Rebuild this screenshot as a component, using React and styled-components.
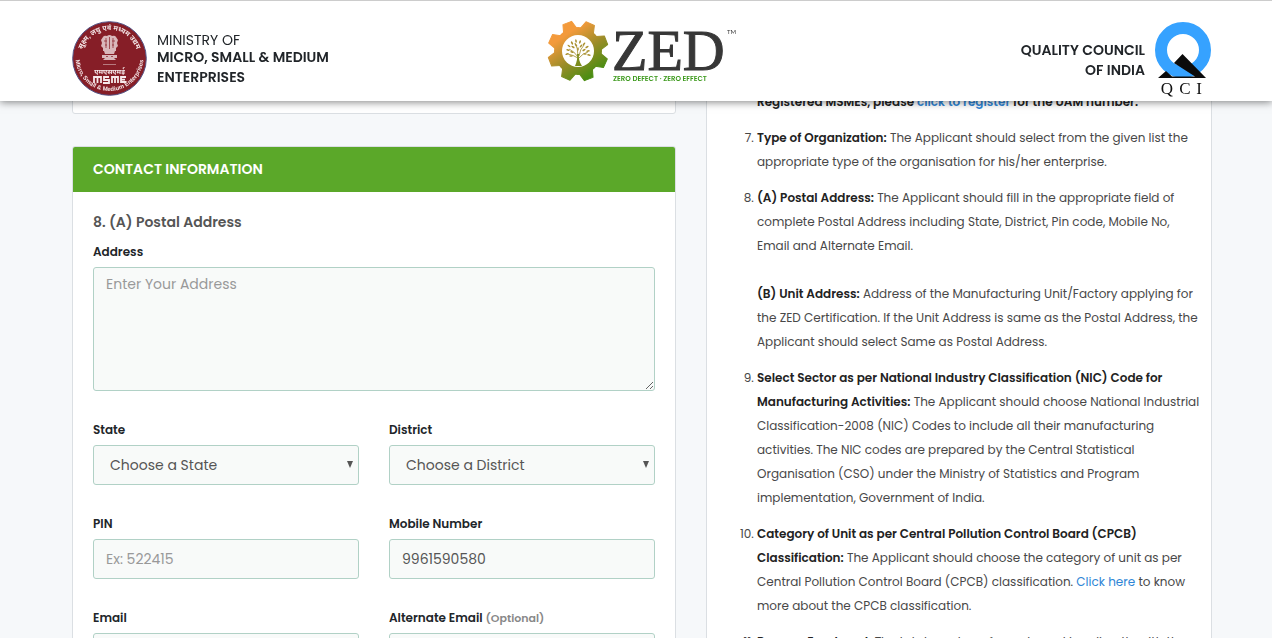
import styled, { createGlobalStyle } from "styled-components";
import { useState } from "react";

const GlobalStyle = createGlobalStyle`
  * {
    box-sizing: border-box;
  }
  body {
    margin: 0;
    background: #f6f8fa;
    font-family: Poppins, Inter, "Open Sans", sans-serif;
    color: #212529;
  }
`;

const Page = styled.div`
  height: 100vh;
  overflow: hidden;
`;

const Header = styled.header`
  position: fixed;
  top: 0;
  left: 0;
  right: 0;
  z-index: 10;
  display: grid;
  grid-template-columns: 1fr auto 1fr;
  align-items: start;
  height: 101px;
  padding: 20px 60px 0 72px;
  background: white;
  border-top: 1px solid #ccc;
  box-shadow: 0 1px 8px rgba(0, 0, 0, 0.5);
`;

const Brand = styled.div`
  display: flex;
  gap: 10px;
  justify-content: ${(props) => (props.$end ? "flex-end" : "flex-start")};
  text-align: ${(props) => (props.$end ? "right" : "left")};
`;

const BrandText = styled.div`
  padding-top: ${(props) => (props.$end ? "19px" : "12px")};
  font-size: 14px;
  line-height: 20px;
  font-weight: 600;
`;

const BrandSmall = styled.div`
  line-height: 14px;
  font-weight: 400;
`;

const Main = styled.main`
  display: grid;
  grid-template-columns: 604fr 506fr;
  gap: 30px;
  padding: 0 60px 0 72px;
`;

const Card = styled.section`
  background: white;
  border: 1px solid #dbdfe3;
  border-radius: 3px;
`;

const PreviousCard = styled(Card)`
  height: 114px;
  margin-bottom: 32px;
`;

const CardTitle = styled.h2`
  margin: 0;
  padding: 0 20px;
  background: #5ba829;
  border-radius: 2px 2px 0 0;
  color: white;
  font-size: 14px;
  line-height: 45px;
  font-weight: 600;
`;

const Form = styled.form`
  display: grid;
  grid-template-columns: 1fr 1fr;
  column-gap: 30px;
  padding: 20px;
`;

const SubTitle = styled.h3`
  grid-column: 1 / -1;
  margin: 0 0 10px;
  color: #555;
  font-size: 14px;
  line-height: 20px;
  font-weight: 600;
`;

const Field = styled.div`
  grid-column: ${(props) => (props.$wide ? "1 / -1" : "auto")};
  margin-bottom: 29px;
`;

const Label = styled.label`
  display: block;
  margin-bottom: 5px;
  font-size: 12px;
  line-height: 20px;
  font-weight: 600;
`;

const Optional = styled.span`
  color: #888;
  font-size: 11px;
  font-weight: 600;
`;

const Input = styled.input`
  display: block;
  width: 100%;
  height: 40px;
  padding: 0 12px;
  background: #f8faf9;
  border: 1px solid #b1d1c6;
  border-radius: 3px;
  color: #555;
  font: inherit;
  font-size: 14px;
  &::placeholder {
    color: #999;
  }
`;

const TextArea = styled(Input).attrs({ as: "textarea" })`
  height: 124px;
  padding: 6px 12px;
  line-height: 20px;
`;

const SelectBox = styled.div`
  position: relative;
  &::after {
    content: "";
    position: absolute;
    right: 6px;
    top: 16px;
    border: solid transparent;
    border-width: 7px 3px 0;
    border-top-color: #555;
    pointer-events: none;
  }
`;

const Select = styled(Input).attrs({ as: "select" })`
  padding: 0 16px;
  appearance: none;
`;

const Guide = styled(Card)`
  padding: 89px 8px 0 50px;
`;

const List = styled.ol`
  margin: 0;
  padding: 0;
  color: #484848;
  font-size: 12px;
  line-height: 24px;
`;

const Item = styled.li`
  margin-bottom: 12px;
  list-style: ${(props) => (props.$plain ? "none" : "decimal")};
  b {
    color: #222;
    font-weight: 600;
  }
`;

const SecondPart = styled.div`
  margin-top: 24px;
`;

const Link = styled.a`
  color: #2f86d6;
  text-decoration: none;
`;

const Logo = styled.svg`
  display: block;
  flex: none;
  overflow: visible;
`;

const MsmeLogo = () => (
  <Logo width="75" height="75" viewBox="0 0 75 75" role="img" aria-label="MSME">
    <defs>
      <path id="arcTop" d="M9 37.5a28.500 28.500 0 0 1 57 0" />
      <path id="arcBottom" d="M3.5 36a34 34 0 0 0 68 0" />
    </defs>
    <circle cx="37.5" cy="37.5" r="36.8" fill="#861e27" stroke="#515184" />
    <g fill="#f6e9ea" fontWeight="700" textAnchor="middle">
      <text fontSize="7" fontFamily="Noto Sans, sans-serif">
        <textPath href="#arcTop" startOffset="50%">सूक्ष्म, लघु एवं मध्यम उद्यम</textPath>
      </text>
      <text fontSize="6" fontFamily="Liberation Sans, sans-serif">
        <textPath href="#arcBottom" startOffset="50%">Micro, Small &amp; Medium Enterprises</textPath>
      </text>
      <text x="37.5" y="53" fontSize="7" fontFamily="Noto Sans, sans-serif">एमएसएमई</text>
    </g>
    <g fill="#d9b7ba">
      <path d="M31 16q1-2 4-1 2.500-2 5 0 3-1 4 1l2 3-1 3 1 3-2 2v3h-13v-3l-2-2 1-3-1-3z" />
      <path d="M32 30h11l-1 3h-9zM30 34h15v3h-15zM33 37h9l2 2h-13z" />
      <path d="M31 43h13v1h-13z" opacity=".6" />
    </g>
    <path d="M34 17v10M37.500 16v12M41 17v10M32 20h3M40 20h3M33 24h2M40 24h2M34 35.500h2M39 35.500h2" stroke="#861e27" strokeWidth=".7" fill="none" />
    <path d="M22 62v-6h7v6M25.500 56v6M37 56h-5v3h5v3h-6M40 62v-6h6v6M43 56v6M54 56h-5v5h5M49 58.700h4" stroke="#f6e9ea" strokeWidth="1.800" fill="none" />
  </Logo>
);

const TOOTH = "M-7-22-4.600-30H4.600L7-22z";
const LEAVES = [
  [-10, -1, 20], [-9, -5, 40], [-11, 3, -20], [-6, -8, 60], [-5, -4, 30], [-2, -10, 80],
  [-2, -6, 50], [2, -9, 110], [3, -5, 130], [6, -7, 130], [9, -4, 150], [10, 0, 170],
  [11, 4, 10], [6, -1, 150], [-6, 1, 20], [7, 3, 0], [-7, 5, 0], [0, -2, 90],
];

const ZedLogo = () => (
  <Logo width="190" height="64" viewBox="0 0 190 64" role="img" aria-label="ZED">
    <defs>
      <linearGradient id="gear" gradientUnits="userSpaceOnUse" x1="-16" y1="-20" x2="14" y2="24">
        <stop offset=".1" stopColor="#f39a3b" />
        <stop offset=".55" stopColor="#9a8c28" />
        <stop offset="1" stopColor="#4b8d12" />
      </linearGradient>
      <mask id="gearMask">
        <circle r="24" fill="white" />
        {[24, 69, 114, 159, 204, 249, 294, 339].map((a) => (
          <path key={a} d={TOOTH} fill="white" stroke="white" strokeLinejoin="round" transform={`rotate(${a})`} />
        ))}
        <circle r="16" fill="black" />
      </mask>
    </defs>
    <g transform="translate(31 30)">
      <rect x="-31" y="-31" width="62" height="62" fill="url(#gear)" mask="url(#gearMask)" />
      <path d="M0 6Q-4 0-9-2M0 7Q-5 4-10 3M0 5Q0-3-3-8M1 5Q2-2 6-6M1 7Q5 2 10 1" fill="none" stroke="#a08a28" strokeWidth=".8" />
      <path d="M-3 15Q0 8-1 3h2q-1 6 3 12z" fill="#7b8c1c" />
      {LEAVES.map(([x, y, a]) => (
        <ellipse key={`${x} ${y}`} rx="1.800" ry=".8" fill="#a98f2c" transform={`translate(${x} ${y}) rotate(${a})`} />
      ))}
    </g>
    <text x="65" y="49" fontFamily="Liberation Serif, serif" fontSize="58" fill="#373737" stroke="#373737" strokeWidth="1">ZED</text>
    <text x="180" y="13" fontFamily="Lato, sans-serif" fontSize="6" fill="#373737">TM</text>
    <text x="66" y="60" fontFamily="Poppins, sans-serif" fontWeight="600" fontSize="7" fill="#3e9a1e">ZERO DEFECT · ZERO EFFECT</text>
  </Logo>
);

const QciLogo = () => (
  <Logo width="57" height="76" viewBox="0 0 57 76" role="img" aria-label="QCI">
    <circle cx="28" cy="29" r="22" fill="none" stroke="#36a2ff" strokeWidth="12" />
    <path d="M3 57 11 50 17 55.500H40L19 42 27.500 33 51 57z" fill="#0b0b0b" />
    <g textAnchor="middle" fontFamily="Liberation Serif, serif" fontSize="17" fill="#111">
      <text x="12" y="73">Q</text>
      <text x="30" y="73">C</text>
      <text x="44" y="73">I</text>
    </g>
  </Logo>
);

const App = () => {
  const [mobile, setMobile] = useState("9961590580");

  return (
    <Page>
      <GlobalStyle />
      <Header>
        <Brand>
          <MsmeLogo />
          <BrandText>
            <BrandSmall>MINISTRY OF</BrandSmall>
            MICRO, SMALL &amp; MEDIUM
            <br />
            ENTERPRISES
          </BrandText>
        </Brand>
        <ZedLogo />
        <Brand $end>
          <BrandText $end>
            QUALITY COUNCIL
            <br />
            OF INDIA
          </BrandText>
          <QciLogo />
        </Brand>
      </Header>
      <Main>
        <div>
          <PreviousCard />
          <Card>
            <CardTitle>CONTACT INFORMATION</CardTitle>
            <Form>
              <SubTitle>8. (A) Postal Address</SubTitle>
              <Field $wide>
                <Label htmlFor="address">Address</Label>
                <TextArea id="address" placeholder="Enter Your Address" />
              </Field>
              <Field>
                <Label htmlFor="state">State</Label>
                <SelectBox>
                  <Select id="state">
                    <option>Choose a State</option>
                  </Select>
                </SelectBox>
              </Field>
              <Field>
                <Label htmlFor="district">District</Label>
                <SelectBox>
                  <Select id="district">
                    <option>Choose a District</option>
                  </Select>
                </SelectBox>
              </Field>
              <Field>
                <Label htmlFor="pin">PIN</Label>
                <Input id="pin" type="text" placeholder="Ex: 522415" />
              </Field>
              <Field>
                <Label htmlFor="mobile">Mobile Number</Label>
                <Input id="mobile" type="tel" value={mobile} onChange={(e) => setMobile(e.target.value)} />
              </Field>
              <Field>
                <Label htmlFor="email">Email</Label>
                <Input id="email" type="email" />
              </Field>
              <Field>
                <Label htmlFor="altEmail">
                  Alternate Email <Optional>(Optional)</Optional>
                </Label>
                <Input id="altEmail" type="email" />
              </Field>
            </Form>
          </Card>
        </div>
        <Guide>
          <List start="6">
            <Item $plain>
              <b>
                Registered MSMEs, please <Link href="#register">click to register</Link> for the UAM number.
              </b>
            </Item>
            <Item>
              <b>Type of Organization:</b> The Applicant should select from the given list the
              appropriate type of the organisation for his/her enterprise.
            </Item>
            <Item>
              <b>(A) Postal Address:</b> The Applicant should fill in the appropriate field of
              complete Postal Address including State, District, Pin code, Mobile No, Email and
              Alternate Email.
              <SecondPart>
                <b>(B) Unit Address:</b> Address of the Manufacturing Unit/Factory applying for the
                ZED Certification. If the Unit Address is same as the Postal Address, the Applicant
                should select Same as Postal Address.
              </SecondPart>
            </Item>
            <Item>
              <b>
                Select Sector as per National Industry Classification (NIC) Code for Manufacturing
                Activities:
              </b>{" "}
              The Applicant should choose National Industrial Classification-2008 (NIC) Codes to
              include all their manufacturing activities. The NIC codes are prepared by the Central
              Statistical Organisation (CSO) under the Ministry of Statistics and Program
              implementation, Government of India.
            </Item>
            <Item>
              <b>Category of Unit as per Central Pollution Control Board (CPCB) Classification:</b>{" "}
              The Applicant should choose the category of unit as per Central Pollution Control
              Board (CPCB) classification. <Link href="#cpcb">Click here</Link> to know more about
              the CPCB classification.
            </Item>
            <Item>
              <b>Process Employed:</b> The total number of people working directly with the
            </Item>
          </List>
        </Guide>
      </Main>
    </Page>
  );
};

export default App;
